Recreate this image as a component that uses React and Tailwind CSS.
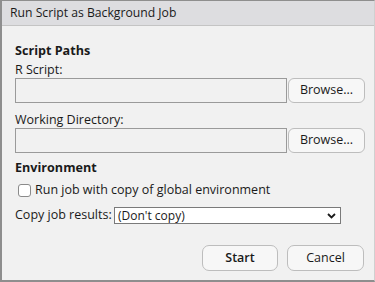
import React, { useState } from 'react';

const font = { fontFamily: '"Open Sans", "DejaVu Sans", sans-serif' };

const PathRow = () => (
    <div className="flex h-[25px] items-stretch">
        <div className="w-[272px] border border-[#9a9a9a] bg-[#f1f1f1]" />
        <button className="ml-[1px] w-[77px] rounded-[6px] border border-[#bdbdbd] bg-[#f7f7f7] text-[12.5px] text-[#1a1a1a]">
            Browse...
        </button>
    </div>
);

export default function App() {
    const [copyEnv, setCopyEnv] = useState(false);

    return (
        <div
            className="flex h-[282px] w-[375px] flex-col border-b-2 border-l-2 border-r border-t border-[#8e8e8e] border-r-[#d0d0d0] bg-[#f1f1f1] text-[#1a1a1a]"
            style={font}
        >
            {/* title bar */}
            <div className="flex h-[25px] items-center border-b border-[#c4c4c4] bg-[#dddde0] pl-[8px] text-[12.2px]">
                Run Script as Background Job
            </div>

            <div className="flex flex-col pl-[13px] pr-[8px]">
                <div className="mt-[17px] h-[16px] text-[12.6px] font-bold leading-[16px]">Script Paths</div>

                <div className="mt-[3px] h-[16px] text-[12.5px] leading-[16px]">R Script:</div>
                <PathRow />

                <div className="mt-[9px] h-[16px] text-[12.5px] leading-[16px]">Working Directory:</div>
                <PathRow />

                <div className="mt-[7px] h-[16px] text-[12.6px] font-bold leading-[16px]">Environment</div>

                <label className="mt-[6px] flex h-[16px] items-center text-[12.5px] leading-[16px]">
                    <span
                        onClick={() => setCopyEnv(!copyEnv)}
                        className="ml-[3px] mr-[4px] h-[13px] w-[13px] rounded-[3px] border border-[#8a8a8a] bg-white"
                    />
                    Run job with copy of global environment
                </label>

                <div className="mt-[9px] flex h-[17px] items-center text-[12.5px]">
                    <span className="w-[99px]">Copy job results:</span>
                    <div className="flex h-[17px] w-[227px] items-center justify-between border border-[#7a7a7a] bg-white pl-[3px] pr-[4px] text-[12px]">
                        <span>(Don't copy)</span>
                        <svg width="9" height="6" viewBox="0 0 9 6" fill="none">
                            <path d="M1 1l3.5 3.5L8 1" stroke="#1a1a1a" strokeWidth="1.8" />
                        </svg>
                    </div>
                </div>

                <div className="mt-[21px] flex justify-end gap-[9px] pr-[2px]">
                    <button className="h-[26px] w-[76px] rounded-[7px] border border-[#bdbdbd] bg-[#f7f7f7] text-[12.5px] font-semibold">
                        Start
                    </button>
                    <button className="h-[26px] w-[77px] rounded-[7px] border border-[#bdbdbd] bg-[#f7f7f7] text-[12.5px]">
                        Cancel
                    </button>
                </div>
            </div>
        </div>
    );
}
